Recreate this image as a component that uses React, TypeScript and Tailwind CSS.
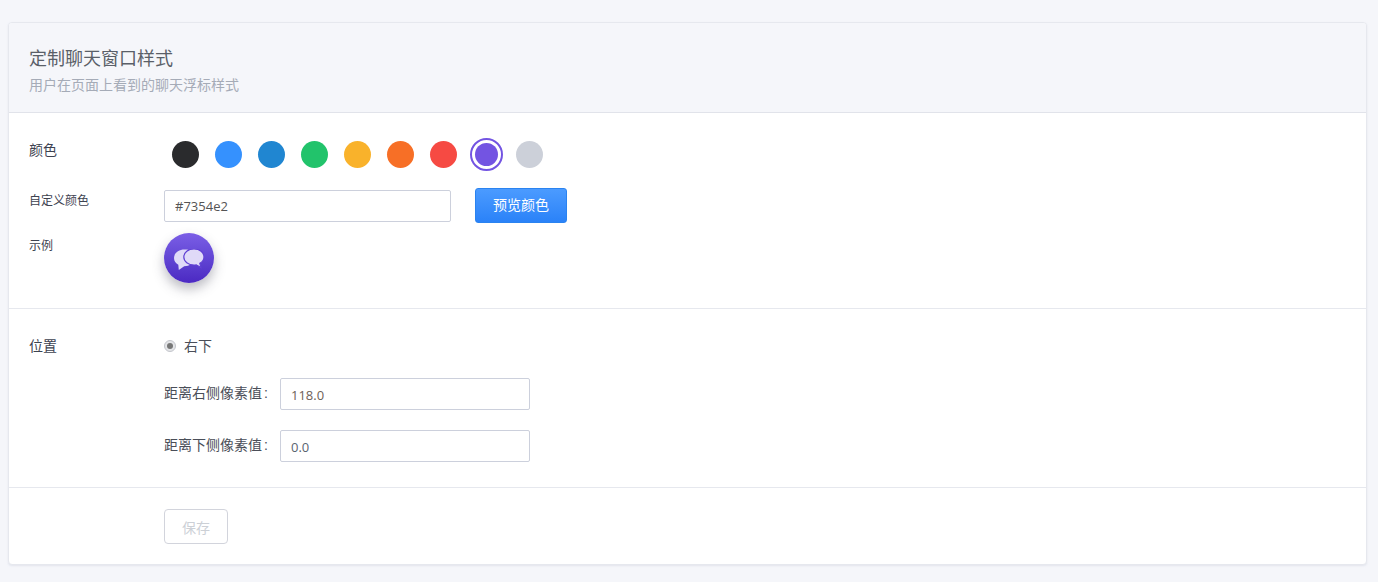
const colors = ['#2a2b2d', '#3591fe', '#2086d1', '#22c36b', '#f9b22b', '#f76f26', '#f64a43', '#7354e2', '#ccd0d9']

function ChatIcon() {
  return (
    <svg width="30" height="21" viewBox="0 0 30 21" fill="none" className="mt-[3px]">
      <path d="M10.500 .5C4.800 .5 0 4 0 9c0 3 1.800 5.400 4.300 6.800L4.800 21l5.400-3.800c2.500 0 5-.6 7-1.900C13 14 10 11.500 10 8c0-3 1.800-5.800 4.500-7.200-1.300-.3-2.700-.3-4-.3z" fill="#e0daf8" />
      <path d="M20 0c-5.700 0-10.200 3.500-10.200 8s4.500 8 10.200 8c.8 0 1.500 0 2.200-.2l4.800 2.700-1.200-4.200C28.400 13 30 10.700 30 8c0-4.500-4.300-8-10-8z" fill="#e0daf8" stroke="#6040d4" strokeWidth="1.200" />
    </svg>
  )
}

export default function App() {
  return (
    <div className="min-h-[582px] bg-[#f5f6fa] pt-[22px] px-2 pb-[17px] text-[14px] text-[#3d4250] [font-family:'Liberation_Sans','Noto_Sans_CJK_SC',sans-serif]">
      <div className="w-[1359px] h-[543px] bg-white border border-[#e6e8ee] rounded-[4px] overflow-hidden shadow-[0_1px_2px_rgba(200,205,220,0.4)]">
        <div className="h-[90px] bg-[#f5f6fa] border-b border-[#e1e3ea] pl-5 pt-[22px]">
          <h1 className="text-[18px] leading-[28px] font-normal text-[#5a5f68]">定制聊天窗口样式</h1>
          <p className="mt-[2px] text-[14px] leading-[20px] text-[#a5abb7]">用户在页面上看到的聊天浮标样式</p>
        </div>

        <div className="h-[196px] border-b border-[#e6e8ee] pl-5 pt-[27px]">
          <div className="flex h-[29px] items-center">
            <label className="w-[135px] -mt-[9px] leading-[20px]">颜色</label>
            <div className="flex items-center gap-[16px] pl-[8px]">
              {colors.map(c => (
                c === '#7354e2' ? (
                  <div key={c} className="-mx-[3px] w-[33px] h-[33px] rounded-full border-2 border-[#7354e2] flex items-center justify-center">
                    <div className="w-[23px] h-[23px] rounded-full bg-[#7354e2]" />
                  </div>
                ) : (
                  <div key={c} className="w-[27px] h-[27px] rounded-full" style={{ backgroundColor: c }} />
                )
              ))}
            </div>
          </div>

          <div className="flex mt-[19px] h-[35px]">
            <label className="w-[135px] pt-[3px] text-[12px] leading-[20px]">自定义颜色</label>
            <input readOnly value="#7354e2" className="mt-[2px] w-[287px] h-[32px] border border-[#ccd0dc] rounded-[2px] px-[10px] text-[13px] text-[#555] outline-none [font-family:'Open_Sans',sans-serif]" />
            <button className="ml-[24px] w-[92px] h-[35px] rounded-[3px] border border-[#2a83f0] bg-gradient-to-b from-[#4b9bff] to-[#2a82f8] text-white text-[14px]">预览颜色</button>
          </div>

          <div className="flex mt-[10px]">
            <label className="w-[135px] text-[12px] leading-[20px] pt-[3px]">示例</label>
            <div className="w-[50px] h-[50px] rounded-full bg-gradient-to-b from-[#7b5ee6] to-[#4b28c2] flex items-center justify-center shadow-[0_6px_12px_rgba(60,60,80,0.35)]">
              <ChatIcon />
            </div>
          </div>
        </div>

        <div className="h-[179px] border-b border-[#e6e8ee] pl-5 pt-[27px]">
          <div className="flex h-[20px] items-center">
            <label className="w-[135px] leading-[20px]">位置</label>
            <div className="w-[12px] h-[12px] rounded-full bg-[#e4e5e8] border border-[#c4c6cc] flex items-center justify-center">
              <div className="w-[6px] h-[6px] rounded-full bg-[#777]" />
            </div>
            <span className="ml-[8px] text-[#4a4e58]">右下</span>
          </div>
          <div className="flex items-center mt-[22px] ml-[135px] h-[32px]">
            <span className="w-[116px] -mt-[2px] text-[#4a4e58]">距离右侧像素值<span className="ml-[2px]">:</span></span>
            <input readOnly value="118.0" className="w-[250px] h-[32px] border border-[#ccd0dc] rounded-[2px] px-[10px] pt-[2px] text-[13px] text-[#6d6258] outline-none [font-family:'Open_Sans',sans-serif]" />
          </div>
          <div className="flex items-center mt-[20px] ml-[135px] h-[32px]">
            <span className="w-[116px] -mt-[2px] text-[#4a4e58]">距离下侧像素值<span className="ml-[2px]">:</span></span>
            <input readOnly value="0.0" className="w-[250px] h-[32px] border border-[#ccd0dc] rounded-[2px] px-[10px] pt-[2px] text-[13px] text-[#5a6470] outline-none [font-family:'Open_Sans',sans-serif]" />
          </div>
        </div>

        <div className="pl-[155px] pt-[21px]">
          <button className="w-[64px] h-[35px] rounded-[4px] border border-[#d2d4dc] bg-white pt-[3px] text-[14px] text-[#ccd0d6]">保存</button>
        </div>
      </div>
    </div>
  )
}
